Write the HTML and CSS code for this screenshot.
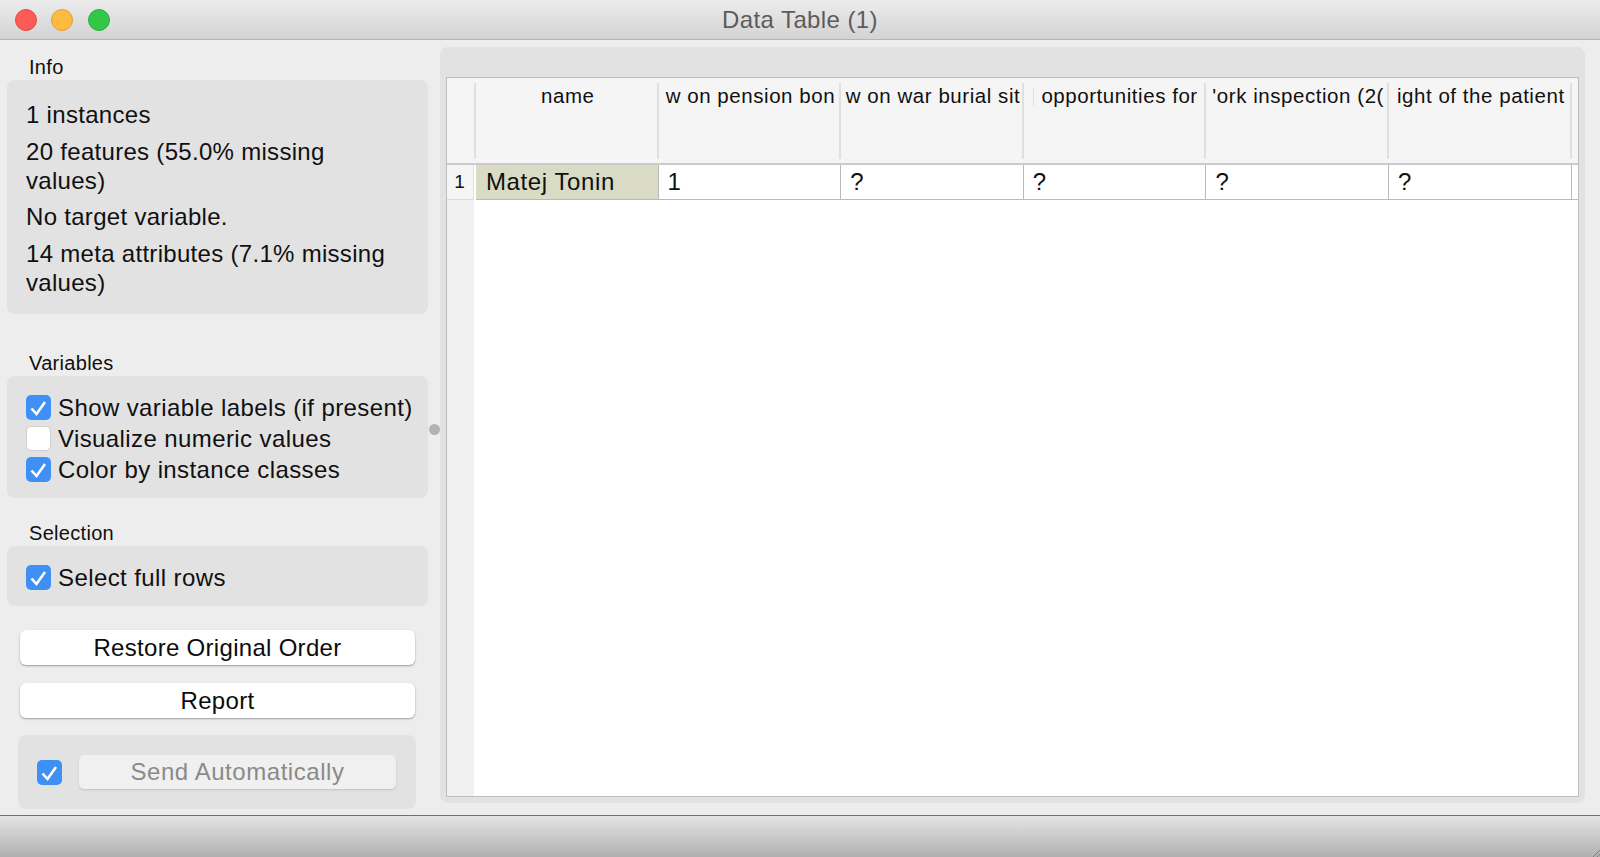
FILE: index.html
```html
<!DOCTYPE html>
<html lang="en">
<head>
    <meta charset="UTF-8">
    <meta name="viewport" content="width=device-width, initial-scale=1.0">
    <title>Data Table (1)</title>
    <link rel="stylesheet" href="styles.css">
</head>
<body>
    <div class="window">
        <div class="title-bar">
            <div class="traffic">
                <span class="light light-close"></span>
                <span class="light light-min"></span>
                <span class="light light-max"></span>
            </div>
            <div class="title-text">Data Table (1)</div>
        </div>

        <div class="main">
            <aside class="sidebar">
                <h3 class="group-label label-info">Info</h3>
                <section class="group info-group">
                    <p>1 instances</p>
                    <p>20 features (55.0% missing values)</p>
                    <p>No target variable.</p>
                    <p>14 meta attributes (7.1% missing values)</p>
                </section>

                <h3 class="group-label label-variables">Variables</h3>
                <section class="group check-group">
                    <div class="check-row">
                        <span class="check on"><svg viewBox="0 0 25 25"><path d="M5.5 13.5l5 5.5 8.5-12"/></svg></span>
                        Show variable labels (if present)
                    </div>
                    <div class="check-row">
                        <span class="check"></span>
                        Visualize numeric values
                    </div>
                    <div class="check-row">
                        <span class="check on"><svg viewBox="0 0 25 25"><path d="M5.5 13.5l5 5.5 8.5-12"/></svg></span>
                        Color by instance classes
                    </div>
                </section>

                <h3 class="group-label label-selection">Selection</h3>
                <section class="group check-group selection-group">
                    <div class="check-row">
                        <span class="check on"><svg viewBox="0 0 25 25"><path d="M5.5 13.5l5 5.5 8.5-12"/></svg></span>
                        Select full rows
                    </div>
                </section>

                <button class="push-btn restore-btn">Restore Original Order</button>
                <button class="push-btn report-btn">Report</button>

                <section class="send-box">
                    <span class="check on"><svg viewBox="0 0 25 25"><path d="M5.5 13.5l5 5.5 8.5-12"/></svg></span>
                    <button class="send-btn" disabled>Send Automatically</button>
                </section>
            </aside>

            <div class="splitter"><span class="splitter-dot"></span></div>

            <div class="table-panel">
                <div class="table-view">
                    <div class="head-row">
                        <div class="corner"></div>
                        <div class="head-cell">name</div>
                        <div class="head-cell">w on pension bon</div>
                        <div class="head-cell">w on war burial sit</div>
                        <div class="head-cell"><span class="clip-mark"></span>opportunities for</div>
                        <div class="head-cell">'ork inspection (2(</div>
                        <div class="head-cell">ight of the patient</div>
                        <div class="head-rest"></div>
                    </div>
                    <div class="data-row">
                        <div class="row-num">1</div>
                        <div class="cell cell-meta">Matej Tonin</div>
                        <div class="cell">1</div>
                        <div class="cell">?</div>
                        <div class="cell">?</div>
                        <div class="cell">?</div>
                        <div class="cell">?</div>
                        <div class="cell-rest"></div>
                    </div>
                    <div class="table-empty">
                        <div class="num-strip"></div>
                    </div>
                </div>
            </div>
        </div>

        <div class="status-bar">
            <svg class="grip" viewBox="0 0 8 8"><path d="M8 1L1 8M8 5L5 8"/></svg>
        </div>
    </div>
</body>
</html>
```

FILE: styles.css
```css
:root {
    --window-bg: #ededed;
    --group-bg: #e2e2e2;
    --check-blue: #3f90f5;
    --text-color: #101010;
    --cell-line: #b9b9b9;
}

* {
    margin: 0;
    padding: 0;
    box-sizing: border-box;
}

body {
    font-family: "Liberation Sans", Arial, sans-serif;
    background-color: var(--window-bg);
    color: var(--text-color);
    overflow: hidden;
}

.window {
    width: 1600px;
    height: 857px;
    display: flex;
    flex-direction: column;
}

/* title bar */
.title-bar {
    height: 40px;
    flex: none;
    display: flex;
    align-items: center;
    background: linear-gradient(#ececec, #d3d3d3);
    border-bottom: 1px solid #b4b4b4;
    padding-left: 14.5px;
}

.traffic {
    display: flex;
    gap: 14.5px;
}

.light {
    width: 22px;
    height: 22px;
    border-radius: 50%;
}

.light-close {
    background: #fc5b57;
    border: 1px solid #e5483f;
}

.light-min {
    background: #fdbc40;
    border: 1px solid #e0a12f;
}

.light-max {
    background: #33c748;
    border: 1px solid #2aae3c;
}

.title-text {
    flex: 1;
    text-align: center;
    font-size: 24px;
    letter-spacing: 0.4px;
    color: #5c5c5c;
    margin-left: -109.5px;
    padding-top: 1px;
}

.main {
    flex: 1;
    display: flex;
    min-height: 0;
}

/* left side */
.sidebar {
    width: 428px;
    flex: none;
    padding-left: 7px;
    display: flex;
    flex-direction: column;
}

.group-label {
    font-size: 20px;
    font-weight: normal;
    line-height: 24px;
    padding-left: 22px;
    letter-spacing: 0.3px;
}

.label-info {
    margin-top: 15px;
    margin-bottom: 1px;
}

.label-variables {
    margin-top: 37px;
    margin-bottom: 1px;
}

.label-selection {
    margin-top: 23px;
    margin-bottom: 1px;
}

.group {
    background: var(--group-bg);
    border-radius: 8px;
    font-size: 24px;
    letter-spacing: 0.3px;
}

.info-group {
    height: 234px;
    padding: 20px 40px 0 19px;
    line-height: 29px;
}

.info-group p {
    margin-bottom: 7.7px;
}

.check-group {
    height: 122px;
    padding-top: 19px;
    padding-left: 19px;
    display: flex;
    flex-direction: column;
    gap: 6px;
}

.selection-group {
    height: 60px;
}

.check-row {
    display: flex;
    align-items: center;
    gap: 7px;
    height: 25px;
    white-space: nowrap;
    letter-spacing: 0.4px;
}

.check {
    width: 25px;
    height: 25px;
    flex: none;
    background: #fff;
    border: 1px solid #cfcfcf;
    border-radius: 5px;
    display: block;
}

.check.on {
    background: var(--check-blue);
    border: none;
}

.check svg {
    display: block;
    width: 25px;
    height: 25px;
    fill: none;
    stroke: #fff;
    stroke-width: 2.6;
}

.push-btn {
    width: 395px;
    height: 35px;
    margin-left: 13px;
    background: #fff;
    border: none;
    border-radius: 6px;
    box-shadow: 0 1px 2px rgba(0,0,0,0.35);
    font-family: inherit;
    font-size: 24px;
    letter-spacing: 0.3px;
    color: #0c0c0c;
    flex: none;
}

.restore-btn {
    margin-top: 24px;
}

.report-btn {
    margin-top: 18px;
}

.send-box {
    width: 398px;
    height: 74px;
    margin-top: 17px;
    margin-left: 11px;
    background: var(--group-bg);
    border-radius: 8px;
    display: flex;
    align-items: center;
    padding-left: 19px;
    gap: 17px;
}

.send-btn {
    width: 317px;
    height: 34px;
    background: #f0f0f0;
    border: none;
    border-radius: 5px;
    box-shadow: 0 1px 2px rgba(0,0,0,0.15);
    font-family: inherit;
    font-size: 24px;
    letter-spacing: 0.55px;
    color: #8a8a8a;
}

.splitter {
    width: 12px;
    flex: none;
    display: flex;
    align-items: center;
    justify-content: center;
    padding-top: 4px;
}

.splitter-dot {
    width: 11px;
    height: 11px;
    border-radius: 50%;
    background: #b3b3b3;
}

/* table */
.table-panel {
    width: 1145px;
    margin-top: 7px;
    margin-bottom: 12px;
    background: var(--group-bg);
    border-radius: 8px;
    padding: 30px 6px 6px 6px;
    display: flex;
}

.table-view {
    flex: 1;
    display: flex;
    flex-direction: column;
    background: #fff;
    border: 1px solid #bdbdbd;
    min-width: 0;
}

.head-row {
    height: 87px;
    flex: none;
    display: flex;
    background: #f5f5f5;
    border-bottom: 2px solid #cbcbcb;
}

.corner {
    width: 29px;
    flex: none;
    margin: 5px 0 4px;
    border-right: 2px solid #dfdfdf;
}

.head-cell {
    width: 182.6px;
    flex: none;
    margin: 5px 0 4px;
    border-right: 2px solid #dfdfdf;
    display: flex;
    justify-content: center;
    align-items: flex-start;
    padding: 1px 0 0 3px;
    white-space: nowrap;
    font-size: 20.5px;
    line-height: 24px;
    letter-spacing: 0.55px;
}

.clip-mark {
    width: 1px;
    height: 19px;
    margin: 3px 7px 0 0;
    background: #d3e4ee;
}

.head-rest {
    flex: 1;
}

.data-row {
    height: 35px;
    flex: none;
    display: flex;
    font-size: 24px;
    line-height: 33px;
    letter-spacing: 0.6px;
}

.row-num {
    width: 27px;
    flex: none;
    margin-right: 2px;
    background: #f5f5f5;
    border-right: 1px solid #dfdfdf;
    border-bottom: 1px solid #dcdcdc;
    text-align: center;
    font-size: 19px;
    letter-spacing: 0;
    padding-right: 1px;
}

.cell {
    width: 182.6px;
    flex: none;
    padding-left: 9px;
    border-right: 1px solid var(--cell-line);
    border-bottom: 1px solid var(--cell-line);
}

.cell-meta {
    padding-left: 10px;
    background: #d9dbc4;
}

.cell-rest {
    flex: 1;
    border-bottom: 1px solid var(--cell-line);
}

.table-empty {
    flex: 1;
    display: flex;
}

.num-strip {
    width: 27px;
    background: #f0f0f0;
}

.status-bar {
    height: 42px;
    flex: none;
    display: flex;
    justify-content: flex-end;
    align-items: flex-end;
    background: linear-gradient(#e4e4e4, #b0b0b0);
    border-top: 1px solid #6f6f6f;
}

.grip {
    width: 8px;
    height: 8px;
    fill: none;
    stroke: #7d7d7d;
    stroke-width: 1;
}
```
